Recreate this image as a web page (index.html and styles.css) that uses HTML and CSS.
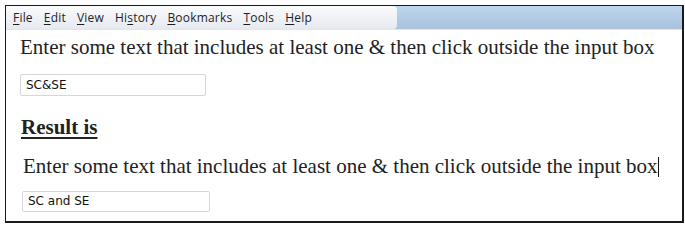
FILE: index.html
```html
<!DOCTYPE html>
<html>
<head>
<meta charset="utf-8">
<link rel="stylesheet" href="styles.css">
</head>
<body>
<div class="frame">
  <div class="menubar">
    <div class="menus">
      <span class="item"><u>F</u>ile</span>
      <span class="item"><u>E</u>dit</span>
      <span class="item"><u>V</u>iew</span>
      <span class="item">Hi<u>s</u>tory</span>
      <span class="item"><u>B</u>ookmarks</span>
      <span class="item"><u>T</u>ools</span>
      <span class="item"><u>H</u>elp</span>
    </div>
  </div>
  <div class="content">
    <p class="line first">Enter some text that includes at least one &amp; then click outside the input box</p>
    <div class="field">SC&amp;SE</div>
    <p class="result">Result is</p>
    <p class="line second">Enter some text that includes at least one &amp; then click outside the input box<span class="caret"></span></p>
    <div class="field field2">SC and SE</div>
  </div>
</div>
</body>
</html>
```
FILE: styles.css
```css
html, body {
  margin: 0;
  padding: 0;
  background: #ffffff;
}
.frame {
  margin: 5px 0 0 5px;
  width: 676px;
  height: 215px;
  border: 1px solid #1a1a1a;
  border-right-width: 2px;
  border-bottom-width: 2px;
  overflow: hidden;
  display: flex;
  flex-direction: column;
}
.menubar {
  height: 23px;
  flex: none;
  background: linear-gradient(#bdd7f1, #a9c1db);
  border-bottom: 1px solid #dfe6ee;
  display: flex;
}
.menus {
  display: flex;
  align-items: center;
  padding-left: 7px;
  width: 384px;
  background: linear-gradient(#f9fafc, #e6eaf0);
  border-radius: 0 4px 4px 0;
  font-family: "Open Sans", "DejaVu Sans", sans-serif;
  font-size: 12px;
  letter-spacing: 0.2px;
  color: #1e1e1e;
}
.item {
  margin-right: 11px;
}
.item u {
  text-decoration-thickness: 1px;
  text-underline-offset: 2px;
}
.content {
  padding: 0 0 0 14px;
  font-family: "Liberation Serif", "Times New Roman", serif;
  color: #222222;
}
.line {
  margin: 0;
  font-size: 21px;
  line-height: 24px;
  white-space: nowrap;
}
.first {
  margin-top: 5px;
}
.field {
  margin-top: 15px;
  width: 179px;
  height: 20px;
  border: 1px solid #d4d6da;
  border-radius: 2px;
  font-family: "DejaVu Sans", Verdana, sans-serif;
  font-size: 12px;
  line-height: 20px;
  padding-left: 5px;
  color: #111;
}
.result {
  margin: 19px 0 0 1px;
  font-size: 21px;
  line-height: 24px;
  font-weight: bold;
  text-decoration: underline;
  text-underline-offset: 3px;
}
.second {
  margin: 15px 0 0 3px;
}
.caret {
  display: inline-block;
  width: 1px;
  height: 20px;
  background: #111;
  vertical-align: -4px;
}
.field2 {
  margin: 13px 0 0 2px;
  width: 181px;
  height: 19px;
  line-height: 19px;
}
```
